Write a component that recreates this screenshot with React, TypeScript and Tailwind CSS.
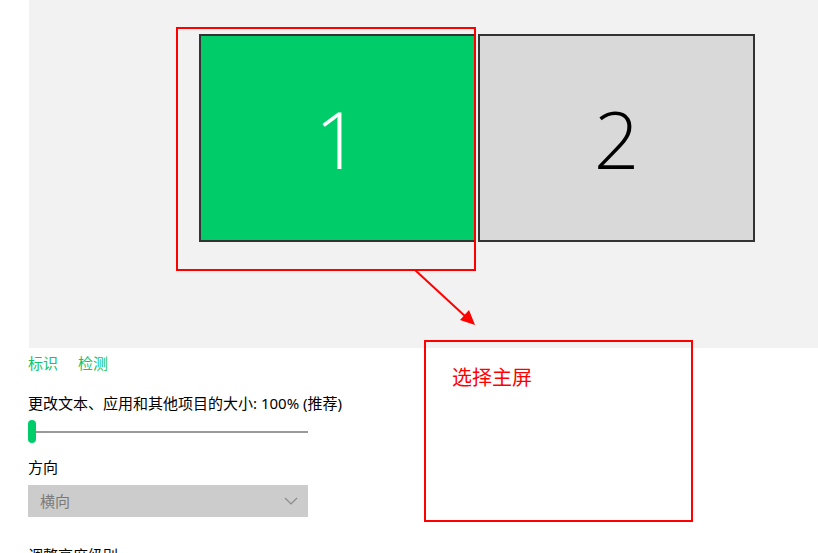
import React from "react";

export default function App() {
  return (
    <div
      className="relative w-[818px] h-[553px] overflow-hidden bg-white text-black"
      style={{ fontFamily: '"Noto Sans", "Noto Sans CJK SC", sans-serif' }}
    >
      {/* display arrangement panel */}
      <div className="ml-[29px] h-[348px] bg-[#f2f2f2] pt-[34px] pl-[170px] flex gap-[2px]">
        <div className="w-[277px] h-[208px] bg-[#00cc6a] border-2 border-[#333333] flex items-center justify-center">
          <span
            className="text-white text-[80px] leading-none font-light"
            style={{ fontFamily: '"Open Sans", sans-serif' }}
          >
            1
          </span>
        </div>
        <div className="w-[277px] h-[208px] bg-[#d9d9d9] border-2 border-[#333333] flex items-center justify-center">
          <span
            className="text-black text-[80px] leading-none font-light"
            style={{ fontFamily: '"Open Sans", sans-serif' }}
          >
            2
          </span>
        </div>
      </div>

      {/* settings */}
      <div className="pl-[28px] text-[15px] leading-[20px]">
        <div className="mt-[5px] flex gap-[20px] text-[#10c46c]">
          <span>标识</span>
          <span>检测</span>
        </div>
        <div className="mt-[20px]">更改文本、应用和其他项目的大小: 100% (推荐)</div>
        <div className="mt-[7px] w-[280px] h-[23px] flex items-center">
          <div className="w-[8px] h-[23px] rounded-full bg-[#00cc6a]" />
          <div className="flex-1 h-[2px] bg-[#999999]" />
        </div>
        <div className="mt-[14px]">方向</div>
        <div className="mt-[8px] w-[280px] h-[32px] bg-[#cccccc] flex items-center justify-between pl-[12px] pr-[10px] text-[#7a7a7a]">
          <span>横向</span>
          <svg width="14" height="8" viewBox="0 0 14 8" fill="none">
            <polyline points="1,1 7,7 13,1" stroke="#8a8a8a" strokeWidth="1.2" />
          </svg>
        </div>
        <div className="mt-[28px]">调整亮度级别</div>
      </div>

      {/* annotations */}
      <div className="absolute left-[176px] top-[27px] w-[300px] h-[244px] border-2 border-[#ff0000]" />
      <svg className="absolute left-0 top-0" width="818" height="553" fill="none">
        <line x1="415" y1="270" x2="466" y2="317" stroke="#ff0000" strokeWidth="2" />
        <polygon points="475,325 460,320 469,310" fill="#ff0000" />
      </svg>
      <div className="absolute left-[424px] top-[340px] w-[269px] h-[182px] border-2 border-[#ff0000] pl-[26px] pt-[24px]">
        <span className="text-[#ff0000] text-[20px] leading-[24px]">选择主屏</span>
      </div>
    </div>
  );
}
